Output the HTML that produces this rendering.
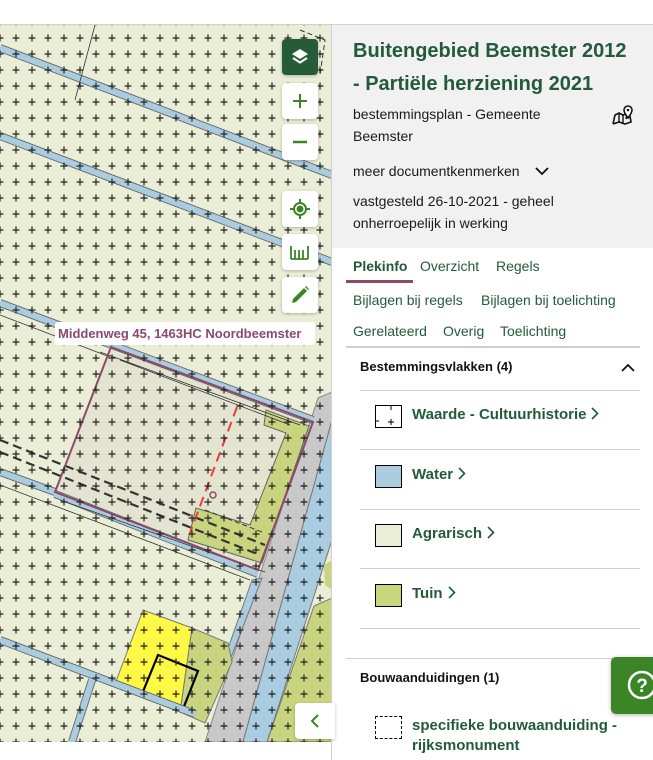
<!DOCTYPE html>
<html><head><meta charset="utf-8"><style>
*{margin:0;padding:0;box-sizing:border-box}
body{width:653px;height:760px;overflow:hidden;background:#fff;font-family:"Liberation Sans",sans-serif;position:relative}
.abs{position:absolute}
.btn{position:absolute;left:282px;width:36px;height:36px;background:#fff;border-radius:4px;box-shadow:0 1px 3px rgba(0,0,0,.25);display:flex;align-items:center;justify-content:center}
.t{position:absolute;white-space:nowrap}
.g{color:#235a3b}
.hr{position:absolute;height:1px;background:#cfcfcf}
.sw{position:absolute;left:375px;width:27px;height:23px;border:1px solid #000}
.it{position:absolute;left:412px;font-weight:bold;font-size:15px;color:#235a3b;white-space:nowrap}
.it svg{margin-left:5px;vertical-align:-1px}
</style></head><body>
<div class="abs" style="left:0;top:24px;width:653px;height:1px;background:#d0d0d0"></div>
<svg class="abs" style="left:0;top:25px" width="332" height="717" viewBox="0 25 332 717">
<defs>
<pattern id="p" x="-8" y="-2" width="16" height="16" patternUnits="userSpaceOnUse">
<path d="M4.5 8H11.5M8 4.5V11.5" stroke="#222" stroke-width="1.2"/>
</pattern>
</defs>
<rect x="0" y="25" width="332" height="717" fill="#ebeed6"/>
<polygon points="111,347 313,422 258,570 55,492" fill="#e3e4cf"/>
<polygon points="318,398 332,392 332,420 243,742 205,742" fill="#c8c8c8" stroke="#888" stroke-width="1"/>
<polygon points="332,420 332,540 267,742 243,742" fill="#a9cce0" stroke="#777" stroke-width="1"/>
<polygon points="314,606 332,598 332,742 267,742" fill="#c9d57e" stroke="#777" stroke-width="1"/>
<polygon points="324,565 332,560 332,590 325,585" fill="#c9d57e"/>
<polygon points="252,580 262,578 230,660 224,660" fill="#a9cce0" stroke="#777" stroke-width="1"/>
<polygon points="266,410 309,426 262,563 188,540 196,508 250,525 286,433 264,425" fill="#c9d57e" stroke="#666" stroke-width="1"/>
<polygon points="192,628 228,643 232,662 205,723 180,712" fill="#c9d57e" stroke="#777" stroke-width="1"/>
<polygon points="143,610 192,628 180,712 115,684" fill="#fff946" stroke="#777" stroke-width="1"/>
<polygon points="158,655 198,671 183,709 142,694" fill="none" stroke="#000" stroke-width="2.2"/>
<g stroke="#666" stroke-width="8" fill="none"><path d="M0 48L332 175M0 136L332 262M0 303L112 345L313 420M0 472L55 492M55 494L258 574M0 640L195 714M92 680L72 742"/></g>
<g stroke="#a9cce0" stroke-width="6.2" fill="none"><path d="M0 48L332 175M0 136L332 262M0 303L112 345L313 420M0 472L55 492M55 494L258 574M0 640L195 714M92 680L72 742"/></g>
<g stroke="#333" stroke-width="0.8" fill="none"><path d="M95 25L75 100M0 315L110 357M0 485L250 580M60 500L265 572M120 360L290 425M100 352L300 425"/></g>
<g stroke="#333" stroke-width="2.2" fill="none" stroke-dasharray="9,5"><path d="M0 440L265 545M0 452L260 555"/></g>
<path d="M205 510L262 532" stroke="#333" stroke-width="1" stroke-dasharray="5,3"/>
<path d="M300 30L325 40L320 75" stroke="#333" stroke-width="1" stroke-dasharray="5,3" fill="none"/>
<polygon points="111,347 313,422 258,570 55,492" fill="none" stroke="#8b4a6a" stroke-width="2"/>
<path d="M237 407L190 533" stroke="#f03a3a" stroke-width="2" stroke-dasharray="10,6"/>
<circle cx="213" cy="495" r="3" fill="none" stroke="#8b4a6a" stroke-width="1.5"/>
<rect x="0" y="25" width="332" height="717" fill="url(#p)"/>
</svg>
<div class="abs" style="left:331px;top:25px;width:1px;height:735px;background:#d0d0d0"></div>
<div class="abs" style="left:55px;top:322px;width:260px;height:23px;background:#fff;border-radius:3px;color:#8b4a6a;font-weight:bold;font-size:13px;line-height:23px;padding-left:3px;white-space:nowrap">Middenweg 45, 1463HC Noordbeemster</div>
<div class="btn" style="top:39px;background:#265b3a"><svg width="22" height="22" viewBox="0 0 22 22"><path d="M11 3L19 8L11 13L3 8Z" fill="#fff"/><path d="M4 12L11 16.5L18 12" stroke="#fff" stroke-width="2" fill="none"/></svg></div>
<div class="btn" style="top:83px"><svg width="20" height="20"><path d="M10 3V17M3 10H17" stroke="#3b8527" stroke-width="2"/></svg></div>
<div class="btn" style="top:124px"><svg width="20" height="20"><path d="M3 10H17" stroke="#3b8527" stroke-width="2.5"/></svg></div>
<div class="btn" style="top:191px"><svg width="24" height="24"><circle cx="12" cy="12" r="6" fill="none" stroke="#3b8527" stroke-width="2"/><circle cx="12" cy="12" r="3.5" fill="#3b8527"/><path d="M12 2V6M12 18V22M2 12H6M18 12H22" stroke="#3b8527" stroke-width="2"/></svg></div>
<div class="btn" style="top:234px"><svg width="22" height="20"><path d="M2 4V17M6 8V17M10 8V17M14 8V17M19 4V17M2 17H19" stroke="#3b8527" stroke-width="1.8"/></svg></div>
<div class="btn" style="top:277px"><svg width="22" height="22"><path d="M3 19L4 15L15 4L18 7L7 18Z" fill="#3b8527"/><path d="M16 3L17 2L20 5L19 6Z" fill="#3b8527"/></svg></div>
<div class="btn" style="left:295px;top:703px;width:40px;border-radius:4px 0 0 4px"><svg width="14" height="16"><path d="M10 2L4 8L10 14" stroke="#3b8527" stroke-width="2" fill="none"/></svg></div>
<div class="abs" style="left:0;top:742px;width:331px;height:18px;background:#fff"></div>

<div class="abs" style="left:332px;top:25px;width:321px;height:223px;background:#f1f1f1"></div>
<div class="t g" style="left:353px;top:35px;font-size:20px;font-weight:bold;line-height:33px">Buitengebied Beemster 2012<br>- Partiële herziening 2021</div>
<div class="t" style="left:353px;top:103px;font-size:14px;line-height:22px;color:#1a1a1a">bestemmingsplan - Gemeente<br>Beemster</div>
<svg class="abs" style="left:611px;top:103px" width="24" height="24" viewBox="0 0 24 24"><path d="M2 21L4 12L8 10L12 12L15 11M15 16L16 12M2 21L8 19L14 21L20 19L19 13" fill="none" stroke="#111" stroke-width="1.6"/><path d="M8 10V19M12 12V21" stroke="#111" stroke-width="1.4"/><path d="M17 15C14 11 13 9 13 7A4 4 0 0 1 21 7C21 9 20 11 17 15Z" fill="#fff" stroke="#111" stroke-width="1.6"/><circle cx="17" cy="7" r="1.3" fill="#111"/></svg>
<div class="t" style="left:353px;top:163px;font-size:14px;color:#1a1a1a">meer documentkenmerken</div>
<svg class="abs" style="left:535px;top:166px" width="14" height="10"><path d="M1 2L7 8L13 2" stroke="#111" stroke-width="1.8" fill="none"/></svg>
<div class="t" style="left:353px;top:190px;font-size:14px;line-height:22px;color:#1a1a1a">vastgesteld 26-10-2021 - geheel<br>onherroepelijk in werking</div>

<div class="t g" style="left:353px;top:258px;font-size:14px;font-weight:bold">Plekinfo</div>
<div class="t g" style="left:420px;top:258px;font-size:14px">Overzicht</div>
<div class="t g" style="left:496px;top:258px;font-size:14px">Regels</div>
<div class="abs" style="left:346px;top:280px;width:67px;height:3px;background:#8b4a6a"></div>
<div class="t g" style="left:353px;top:292px;font-size:14px">Bijlagen bij regels</div>
<div class="t g" style="left:481px;top:292px;font-size:14px">Bijlagen bij toelichting</div>
<div class="t g" style="left:353px;top:323px;font-size:14px">Gerelateerd</div>
<div class="t g" style="left:443px;top:323px;font-size:14px">Overig</div>
<div class="t g" style="left:500px;top:323px;font-size:14px">Toelichting</div>
<div class="abs" style="left:346px;top:346px;width:294px;height:2px;background:#cfcfcf"></div>
<div class="t" style="left:360px;top:359px;font-size:13px;font-weight:bold;color:#111">Bestemmingsvlakken (4)</div>
<svg class="abs" style="left:621px;top:363px" width="14" height="10"><path d="M1 8L7 2L13 8" stroke="#111" stroke-width="1.8" fill="none"/></svg>
<div class="hr" style="left:360px;top:390px;width:280px"></div>
<div class="hr" style="left:360px;top:449px;width:280px"></div>
<div class="hr" style="left:360px;top:509px;width:280px"></div>
<div class="hr" style="left:360px;top:568px;width:280px"></div>
<div class="hr" style="left:360px;top:628px;width:280px"></div>
<div class="sw" style="top:405px;background:#fff"><svg class="abs" style="left:0;top:0" width="25" height="21"><path d="M15 0V4M0 15H3M15 13V19M12 16H18" stroke="#000" stroke-width="1"/></svg></div>
<div class="it" style="top:406px">Waarde - Cultuurhistorie<svg width="8" height="13"><path d="M1 1L6.5 6.5L1 12" stroke="#235a3b" stroke-width="1.6" fill="none"/></svg></div>
<div class="sw" style="top:465px;background:#aacde0"></div>
<div class="it" style="top:466px">Water<svg width="8" height="13"><path d="M1 1L6.5 6.5L1 12" stroke="#235a3b" stroke-width="1.6" fill="none"/></svg></div>
<div class="sw" style="top:524px;background:#ebeed6"></div>
<div class="it" style="top:525px">Agrarisch<svg width="8" height="13"><path d="M1 1L6.5 6.5L1 12" stroke="#235a3b" stroke-width="1.6" fill="none"/></svg></div>
<div class="sw" style="top:584px;background:#c9d67e"></div>
<div class="it" style="top:585px">Tuin<svg width="8" height="13"><path d="M1 1L6.5 6.5L1 12" stroke="#235a3b" stroke-width="1.6" fill="none"/></svg></div>
<div class="hr" style="left:346px;top:658px;width:307px"></div>
<div class="t" style="left:360px;top:670px;font-size:13px;font-weight:bold;color:#111">Bouwaanduidingen (1)</div>
<div class="sw" style="top:716px;border:1px dashed #000;background:#fff"></div>
<div class="it" style="top:716px;line-height:20px">specifieke bouwaanduiding -<br>rijksmonument</div>
<div class="abs" style="left:611px;top:657px;width:50px;height:57px;background:#3b8527;border-radius:5px;box-shadow:0 1px 4px rgba(0,0,0,.3)"></div>
<svg class="abs" style="left:626px;top:669px" width="27" height="32"><circle cx="16" cy="16" r="13" fill="none" stroke="#fff" stroke-width="2.5"/><text x="16" y="23" font-family="Liberation Sans" font-weight="bold" font-size="19" fill="#fff" text-anchor="middle">?</text></svg>
</body></html>
